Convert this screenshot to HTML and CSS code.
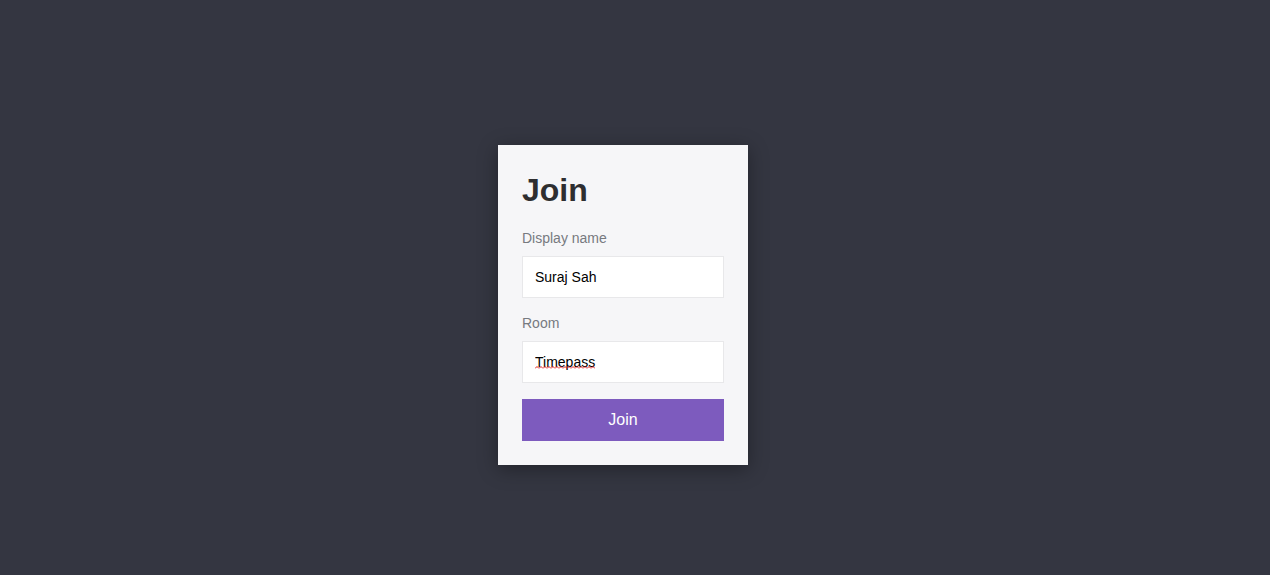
FILE: index.html
```html
<!DOCTYPE html>
<html lang="en">
<head>
<meta charset="utf-8">
<title>Join</title>
<link rel="stylesheet" href="styles.css">
</head>
<body>
<main class="page">
  <form class="card">
    <h1 class="title">Join</h1>
    <label class="label label-first" for="name">Display name</label>
    <input class="field" id="name" type="text" value="Suraj Sah">
    <label class="label" for="room">Room</label>
    <div class="field-wrap spell">
      <input class="field" id="room" type="text" value="Timepass">
    </div>
    <button class="button" type="button">Join</button>
  </form>
</main>
</body>
</html>
```
FILE: styles.css
```css
html, body {
  margin: 0;
  padding: 0;
  background: #343641;
  font-family: "Liberation Sans", Arial, sans-serif;
}
.page {
  box-sizing: border-box;
  min-height: 575px;
  display: flex;
  align-items: center;
  justify-content: center;
  padding: 35px 24px 0 0;
}
.card {
  box-sizing: border-box;
  width: 250px;
  padding: 24px;
  background: #f6f6f8;
  display: flex;
  flex-direction: column;
  box-shadow: 0 4px 18px rgba(0, 0, 0, 0.35);
}
.title {
  margin: 3px 0 0;
  font-size: 32px;
  line-height: 37px;
  font-weight: bold;
  color: #2e2e30;
}
.label {
  display: block;
  margin: 17px 0 10px;
  font-size: 14px;
  line-height: 16px;
  color: #777a80;
}
.label-first {
  margin-top: 21px;
}
.field {
  box-sizing: border-box;
  display: block;
  width: 100%;
  height: 42px;
  margin: 0;
  padding: 0 12px;
  border: 1px solid #e8e8ea;
  background: #fff;
  font-family: "Liberation Sans", Arial, sans-serif;
  font-size: 14px;
  color: #000;
  outline: none;
  border-radius: 0;
}
.field-wrap {
  position: relative;
}
.spell::after {
  content: "";
  position: absolute;
  left: 13px;
  top: 25px;
  width: 60px;
  height: 3px;
  pointer-events: none;
  background-image: url("data:image/svg+xml,%3Csvg xmlns='http://www.w3.org/2000/svg' width='4' height='3'%3E%3Cpath d='M0 2.5 L2 0.5 L4 2.5' fill='none' stroke='%23e01a1a' stroke-width='1'/%3E%3C/svg%3E");
  background-repeat: repeat-x;
  background-size: 4px 3px;
}
.button {
  box-sizing: border-box;
  width: 100%;
  height: 42px;
  margin: 16px 0 0;
  padding: 0;
  border: 0;
  border-radius: 0;
  background: #7d5bbe;
  color: #fff;
  font-family: "Liberation Sans", Arial, sans-serif;
  font-size: 16px;
}
```
